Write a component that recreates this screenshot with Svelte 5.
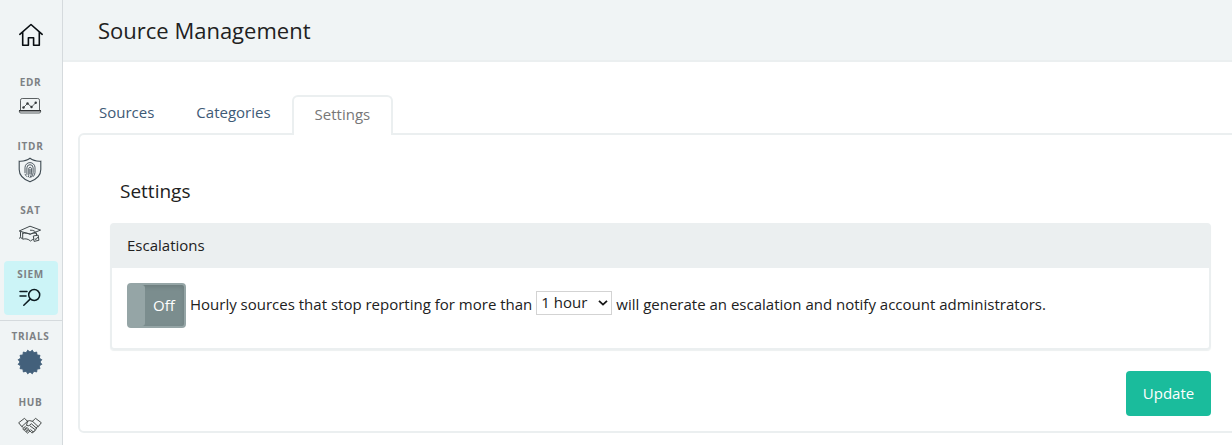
<script>
  let enabled = $state(false);
  let delay = $state('1 hour');
  const items = ['EDR', 'ITDR', 'SAT', 'SIEM', 'TRIALS', 'HUB'];
  const badge = Array.from({ length: 32 }, (_, i) => {
    const r = i % 2 ? 9.9 : 12;
    const a = ((i + 1) * Math.PI) / 16;
    return `${(13 + r * Math.sin(a)).toFixed(2)},${(13 - r * Math.cos(a)).toFixed(2)}`;
  }).join(' ');
</script>

<div class="app">
  <nav class="side">
    <a class="home" href="#home" aria-label="Home">
      <svg width="26" height="24" viewBox="0 0 26 24" fill="none" stroke="#080d11" stroke-width="1.6" stroke-linejoin="round" stroke-linecap="round">
        <path d="M1.8 11.3 13 1.5l11.2 9.8M4.7 9v13.2h5.7v-7.5h5.2v7.5h5.7V9" />
      </svg>
    </a>
    {#each items as name}
      <a class="item {name.toLowerCase()}" href={'#' + name}>
        <span>{name}</span>
        <div class="icon">
          {#if name === 'EDR'}
            <svg width="24" height="18" viewBox="0 0 24 18" fill="none" stroke="#5b6062" stroke-width="1">
              <path d="M2.5 13V3.2Q2.5 1.5 4.2 1.5h15.6q1.7 0 1.7 1.7V13" />
              <path d="M1.4 13.8h21.2v1q0 1.2-1.5 1.2H2.9q-1.5 0-1.5-1.2z" />
              <path d="M1 13.7h22" stroke="#25292b" stroke-width="1.2" />
              <path d="m5.5 10.5 4-4 4 3.5 4.2-4.2" />
              <g fill="#303638" stroke="none"><circle cx="5.5" cy="10.5" r="1.2" /><circle cx="9.5" cy="6.5" r="1.2" /><circle cx="13.5" cy="10" r="1.2" /><circle cx="17.7" cy="5.8" r="1.2" /></g>
            </svg>
          {:else if name === 'ITDR'}
            <svg width="24" height="26" viewBox="0 0 24 26" fill="none" stroke="#3e4a52" stroke-width="1.1" stroke-linecap="round">
              <path d="M12 1.3C9 3.7 5.2 4.4 1.2 4.2v8.3c0 6 4.6 10 10.8 12.3 6.2-2.3 10.8-6.3 10.8-12.3V4.2C18.8 4.4 15 3.7 12 1.3z" />
              <g stroke-width=".9">
                <path d="M7 15.8V10.6a5 5 0 0 1 10 0v4.8q0 2.5-1.8 4.2M7.2 17.5q.5 1.2 1.5 2M8.9 17.4V10.8a3.1 3.1 0 0 1 6.2 0v5q0 2.7-1.9 4.5M10.4 19.8q.5-1.3.4-2.8v-5.8a1.4 1.4 0 0 1 2.6 0v4.7q0 2.5-1.4 4.6M12 12.4v4.2" />
              </g>
            </svg>
          {:else if name === 'SAT'}
            <svg width="24" height="18" viewBox="0 0 24 18" fill="none" stroke="#41494c" stroke-width="1" stroke-linejoin="round">
              <path d="M1.2 6 12 1.2 22.6 5.1 12.2 9.2z" />
              <path d="M4.7 7.5v6.7c3-.9 5.7-.1 7.8 1.8 1-1 2.2-1.6 3.5-1.8M12.2 9.2c-2.5-1.1-5-1.5-7.5-.8M12.2 9.2c2.1-1.2 4.1-1.3 6.3-.8v2.1" />
              <path d="M12 5.2q5-.4 6.7 3.8v2M2.5 6.8v4.8m-1 2.1 1-2.1 1 2.1" />
              <path d="m15.3 11 4.9-.9.7 5.2-4.8 1.1zM16.8 13.5l1.2 1.1 1.7-2.5" />
            </svg>
          {:else if name === 'SIEM'}
            <svg width="24" height="20" viewBox="0 0 24 20" fill="none" stroke="#0c1b21" stroke-width="1.5" stroke-linecap="round">
              <circle cx="16.2" cy="8" r="5.5" />
              <path d="m12.1 12.1-6.3 6.2M2 4.5h7M2 9.1h6" />
            </svg>
          {:else if name === 'TRIALS'}
            <svg width="26" height="26" viewBox="0 0 26 26"><polygon points={badge} fill="#43607b" stroke="#43607b" stroke-width="1" stroke-linejoin="round" /></svg>
          {:else}
            <svg width="24" height="18" viewBox="0 0 24 18" fill="none" stroke="#343938" stroke-width=".9" stroke-linejoin="round" stroke-linecap="round">
              <path d="M1 5.5 6.5 1.3l3 3-5.5 5.1zM23 5.5l-5.5-4.2-3 3L20 9.4zM9.5 4.2l2.1-.6 2.9.7M9.5 4.3l-1 4.1 2.4.4 2.4-2.1 4.9 4.2q.7 1.4-.7 2l-5.2-3.8M4 9.4l1.2 1.1M20 9.4l-1.8 1.5" />
              <path d="m5 11.6 2.3-2.1 1.1 1.1-2.3 2zM6.8 13.3l2.6-2.3 1.2 1-2.6 2.3zM8.6 14.8l2.3-2 1.2 1-2.3 2.1zM12.1 14l1.7 1.8q1.3.3 1.4-.9l-2.4-2.2M15.2 14.9q1.8.1 2-1.9" />
            </svg>
          {/if}
        </div>
      </a>
    {/each}
  </nav>

  <main>
    <header><h1>Source Management</h1></header>
    <div class="tabs">
      <a href="#sources">Sources</a>
      <a href="#categories">Categories</a>
      <a class="active" href="#settings">Settings</a>
    </div>
    <section class="panel">
      <h2>Settings</h2>
      <div class="card">
        <div class="card-head">Escalations</div>
        <div class="card-body">
          <button class="toggle" onclick={() => (enabled = !enabled)}>
            <i></i><b>{enabled ? 'On' : 'Off'}</b>
          </button>
          <span class="before">Hourly sources that stop reporting for more than</span>
          <label class="select">
            <select bind:value={delay} aria-label="Delay">
              <option>1 hour</option>
              <option>2 hours</option>
            </select>
            <svg width="10" height="6" viewBox="0 0 10 6" fill="none" stroke="#151515" stroke-width="1.8"><path d="m1 .8 4 3.8L9 .8" /></svg>
          </label>
          <span class="after">will generate an escalation and notify account administrators.</span>
        </div>
      </div>
      <div class="actions"><button class="update">Update</button></div>
    </section>
  </main>
</div>

<style>
  :global(body) { background: #fff; overflow: hidden; }
  * { box-sizing: border-box; }
  .app { display: flex; width: 1232px; height: 445px; overflow: hidden; font: 15px/22px "Open Sans", sans-serif; color: #212121; }
  a { text-decoration: none; }
  .side { width: 63px; flex: none; background: #f0f4f5; border-right: 1px solid #d5dadd; display: flex; flex-direction: column; }
  .home { height: 69px; flex: none; padding: 23px 0 0 18px; }
  svg { display: block; }
  .item { height: 54px; flex: none; margin: 0 4px 10px; border-radius: 4px; color: #7d8184; display: flex; flex-direction: column; align-items: center; }
  .item span { font-size: 10px; font-weight: 700; line-height: 14px; letter-spacing: .7px; margin-top: 6px; padding-right: 1px; white-space: nowrap; }
  .icon { height: 34px; width: 54px; display: flex; flex: none; align-items: center; justify-content: center; padding-right: 2px; }
  .siem { background: #ccf4f7; margin-bottom: 5px; }
  .siem .icon { height: 32px; }
  .trials { height: 66px; margin: 0; border-top: 1px solid #d5dadd; border-radius: 0; }
  .trials span { margin-top: 8px; }
  .trials .icon { height: 37px; }
  .hub { margin-top: 3px; }
  .edr .icon { height: 33px; }

  main { flex: 1; min-width: 0; }
  header { height: 62px; background: #f0f4f5; border-bottom: 2px solid #ebeff0; padding: 14px 0 0 35px; }
  h1, h2 { margin: 0; font-weight: 400; }
  h1 { font-size: 22px; line-height: 32px; }
  .tabs { display: flex; height: 73px; padding: 33px 0 0 15px; }
  .tabs a { color: #3e5a76; padding: 6px 21px 0; height: 38px; }
  .tabs .active { position: relative; height: 40px; width: 101px; padding: 6px 0 0 21px; border: 2px solid #ebeff0; border-bottom: 0; border-radius: 6px 6px 0 0; background: #fff; color: #777; }
  .panel { height: 300px; width: 1170px; margin: -2px 0 0 15px; border: 2px solid #ebeff0; border-radius: 6px; padding: 43px 36px 0 30px; }
  h2 { font-size: 19px; line-height: 26px; padding-left: 10px; }
  .card { width: 1101px; height: 127px; margin-top: 19px; border: 2px solid #ebeff0; border-radius: 4px; box-shadow: 0 1px 1px #edf0f0; }
  .card-head { height: 43px; background: #ebeff0; padding: 9px 15px; }
  .card-body { display: flex; align-items: center; height: 75px; padding: 0 15px; white-space: nowrap; }
  button { font: inherit; border: 0; padding: 0; color: #fff; }
  .toggle { width: 59px; height: 45px; border-radius: 4px; border: 2px solid #95a5a6; background: #7b8d8e; display: flex; align-items: center; box-shadow: inset 0 2px 4px rgba(0,0,0,.12); }
  .toggle i { width: 16px; height: 41px; background: #95a5a6; border-radius: 0 3px 3px 0; }
  .toggle b { font-weight: 500; padding: 0 0 2px 8px; }
  .before { margin-left: 4px; }
  .before, .after { padding-bottom: 4px; }
  .select { display: grid; align-items: center; width: 76px; height: 24px; margin: -6px 4px 0; }
  select { grid-area: 1 / 1; appearance: none; width: 76px; height: 24px; border: 1px solid #d3d3d3; border-radius: 0; background: #fff; color: #212121; font: inherit; line-height: 20px; padding: 0 4px 1px; }
  .select svg { grid-area: 1 / 1; justify-self: end; margin-right: 4px; pointer-events: none; z-index: 1; }
  .actions { display: flex; justify-content: flex-end; width: 1101px; margin-top: 21px; }
  .update { width: 85px; height: 45px; border-radius: 4px; background: #1abc9c; font-weight: 500; padding-bottom: 2px; }
</style>
